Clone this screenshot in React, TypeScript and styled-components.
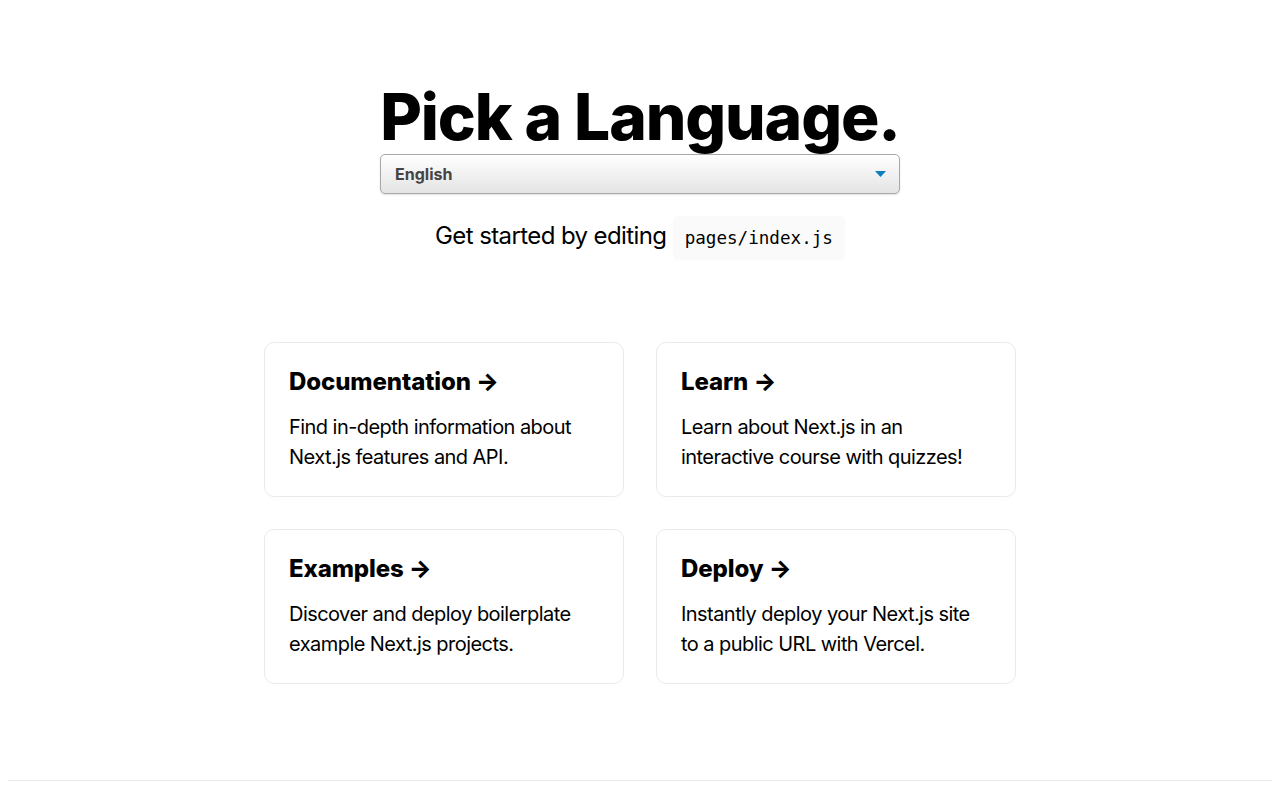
import React from "react";
import styled, { createGlobalStyle } from "styled-components";

const GlobalStyle = createGlobalStyle`
  html, body {
    margin: 0;
    padding: 0;
    background: #fff;
    color: #000;
    font-family: Inter, "Noto Sans", sans-serif;
  }
  * { box-sizing: border-box; }
`;

const Container = styled.div`
  min-height: 100vh;
  padding: 0 8px;
  display: flex;
  flex-direction: column;
  align-items: center;
`;

const Main = styled.main`
  padding: 80px 0;
  flex: 1;
  display: flex;
  flex-direction: column;
  align-items: center;
`;

const Title = styled.h1`
  margin: 0;
  font-size: 64px;
  line-height: 1.15;
  font-weight: 800;
  letter-spacing: -1.1px;
  text-align: center;
`;

const SelectBox = styled.div`
  width: 520px;
  height: 40px;
  display: flex;
  align-items: center;
  justify-content: space-between;
  padding: 0 13px 0 14px;
  border: 1px solid #a8a8a8;
  border-radius: 5px;
  background: linear-gradient(to bottom, #ffffff 0%, #e4e4e4 100%);
  box-shadow: 0 1px 2px rgba(0, 0, 0, 0.12);
  font-size: 16px;
  font-weight: 700;
  color: #444;
`;

const Description = styled.p`
  margin: 24px 0;
  font-size: 24px;
  line-height: 1.5;
  letter-spacing: -0.6px;
  text-align: center;
`;

const Code = styled.code`
  background: #fafafa;
  border-radius: 5px;
  padding: 12px;
  font-size: 17.6px;
  letter-spacing: 0;
  font-family: "DejaVu Sans Mono", monospace;
`;

const Grid = styled.div`
  display: flex;
  flex-wrap: wrap;
  justify-content: center;
  align-items: center;
  max-width: 800px;
  width: 800px;
  margin-top: 48px;
`;

const Card = styled.a`
  margin: 16px;
  flex-basis: 360px;
  padding: 24px;
  text-align: left;
  color: inherit;
  text-decoration: none;
  border: 1px solid #eaeaea;
  border-radius: 10px;
`;

const CardTitle = styled.h3`
  margin: 0 0 16px 0;
  font-size: 24px;
  font-weight: 800;
  line-height: 29px;
  letter-spacing: -0.1px;
`;

const CardText = styled.p`
  margin: 0;
  font-size: 20px;
  line-height: 1.5;
  letter-spacing: -0.55px;
`;

const Footer = styled.footer`
  width: 100%;
  height: 100px;
  border-top: 1px solid #eaeaea;
`;

const cards = [
  { title: "Documentation", text: ["Find in-depth information about", "Next.js features and API."] },
  { title: "Learn", text: ["Learn about Next.js in an", "interactive course with quizzes!"] },
  { title: "Examples", text: ["Discover and deploy boilerplate", "example Next.js projects."] },
  { title: "Deploy", text: ["Instantly deploy your Next.js site", "to a public URL with Vercel."] },
];

export default function App() {
  return (
    <>
      <GlobalStyle />
      <Container>
        <Main>
          <Title>Pick a Language.</Title>
          <SelectBox>
            <span>English</span>
            <svg width="11" height="6" viewBox="0 0 11 6">
              <path d="M0 0 H11 L5.5 6 Z" fill="#0a7fc0" />
            </svg>
          </SelectBox>
          <Description>
            Get started by editing <Code>pages/index.js</Code>
          </Description>
          <Grid>
            {cards.map((c) => (
              <Card key={c.title} href="#">
                <CardTitle>{c.title} &rarr;</CardTitle>
                <CardText>
                  {c.text[0]}
                  <br />
                  {c.text[1]}
                </CardText>
              </Card>
            ))}
          </Grid>
        </Main>
        <Footer />
      </Container>
    </>
  );
}
